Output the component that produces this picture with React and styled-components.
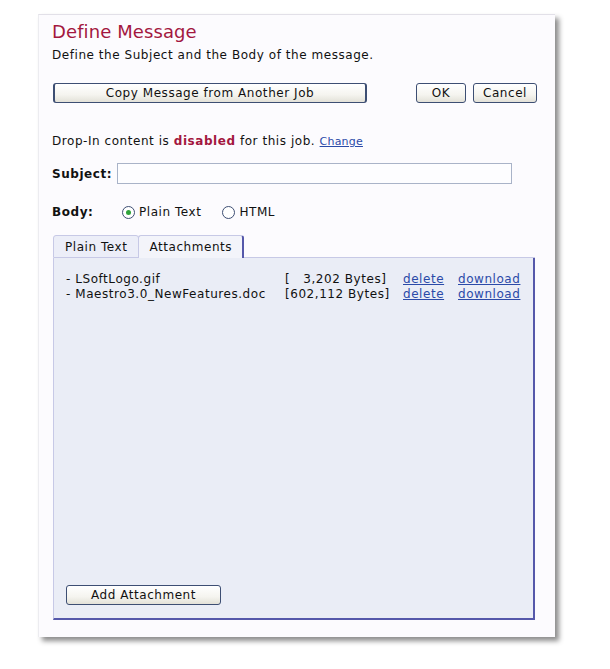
import React from 'react'
import styled, { createGlobalStyle } from 'styled-components'

const Global = createGlobalStyle`
  body {
    margin: 0;
    background: #ffffff;
    font-family: "DejaVu Sans", Verdana, sans-serif;
    letter-spacing: 0.55px;
    color: #111;
  }
`

const Page = styled.div`
  width: 610px;
  height: 669px;
  padding: 14px 0 0 38px;
  box-sizing: border-box;
`

const Dialog = styled.div`
  width: 517px;
  height: 623px;
  box-sizing: border-box;
  background: #fcfbfe;
  border-top: 1px solid #e2e0e8;
  border-left: 1px solid #ececf0;
  box-shadow: 4px 4px 5px rgba(0, 0, 0, 0.45);
  padding: 6px 18px 0 13px;
  display: flex;
  flex-direction: column;
`

const Title = styled.h1`
  margin: 0;
  font-size: 18px;
  font-weight: normal;
  letter-spacing: 0.1px;
  color: #a3173f;
  line-height: 22px;
`

const Sub = styled.p`
  margin: 4px 0 0;
  font-size: 12px;
  line-height: 16px;
`

const Toolbar = styled.div`
  display: flex;
  align-items: center;
  margin-top: 20px;
  padding-left: 1px;
`

const Button = styled.button`
  font-family: inherit;
  font-size: 12px;
  letter-spacing: 0.55px;
  color: #111;
  height: 20px;
  width: ${p => p.$w}px;
  padding: 0;
  margin-left: ${p => p.$ml || 0}px;
  border: 1px solid #3d4e73;
  border-left-width: ${p => (p.$heavy ? 2 : 1)}px;
  border-right-width: ${p => (p.$heavy ? 2 : 1)}px;
  border-radius: 3px;
  background: linear-gradient(#ffffff 0%, #f5f4ef 60%, #e3e1d8 100%);
  line-height: 18px;
  flex-shrink: 0;
`

const Spacer = styled.div`
  flex: 1;
`

const DropIn = styled.p`
  margin: 30px 0 0;
  font-size: 12px;
  line-height: 16px;
`

const Disabled = styled.b`
  color: #a3173f;
`

const SmallLink = styled.a`
  font-size: 11px;
  letter-spacing: 0.2px;
  color: #2b4aa8;
  text-decoration: underline;
`

const FieldRow = styled.div`
  display: flex;
  align-items: center;
  margin-top: ${p => p.$mt}px;
`

const Label = styled.span`
  font-size: 12px;
  font-weight: bold;
  width: ${p => p.$w}px;
`

const TextInput = styled.input`
  width: 395px;
  height: 21px;
  box-sizing: border-box;
  border: 1px solid #a9b3c8;
  background: #fdfdff;
  padding: 0 3px;
`

const Radio = styled.label`
  display: flex;
  align-items: center;
  font-size: 12px;
  margin-right: ${p => p.$mr}px;
`

const Dot = styled.span`
  width: 11px;
  height: 11px;
  border-radius: 50%;
  border: 1px solid #3d4e73;
  background: #fff;
  margin-right: 4px;
  display: flex;
  align-items: center;
  justify-content: center;
  &::after {
    content: '';
    width: 5px;
    height: 5px;
    border-radius: 50%;
    background: ${p => (p.$on ? '#2fa33a' : 'transparent')};
  }
`

const Tabs = styled.div`
  display: flex;
  align-items: flex-end;
  margin-top: 16px;
  margin-left: 1px;
  width: 482px;
  height: 23px;
  flex-shrink: 0;
`

const Tab = styled.div`
  font-size: 12px;
  height: 23px;
  line-height: 22px;
  box-sizing: border-box;
  padding: 0 ${p => p.$px}px;
  border: 1px solid #c7c9e6;
  border-bottom: ${p => (p.$active ? 'none' : '1px solid #c7c9e6')};
  border-right: ${p => (p.$active ? '2px solid #5558aa' : '1px solid #c7c9e6')};
  border-radius: 3px 3px 0 0;
  background: ${p => (p.$active ? '#f3f4fa' : '#eceef8')};
  margin-right: ${p => (p.$active ? 0 : -1)}px;
`

const TabFill = styled.div`
  flex: 1;
  align-self: stretch;
  border-bottom: 1px solid #c7c9e6;
`

const Panel = styled.div`
  width: 482px;
  height: 362px;
  flex-shrink: 0;
  margin-left: 1px;
  box-sizing: border-box;
  background: #eaedf6;
  border-left: 1px solid #c7c9e6;
  border-right: 2px solid #5558aa;
  border-bottom: 2px solid #5558aa;
  padding: 14px 12px 13px 12px;
  display: flex;
  flex-direction: column;
`

const FileList = styled.div`
  display: grid;
  grid-template-columns: 219px 118px 55px auto;
  font-size: 12px;
  line-height: 15px;
  white-space: pre;
`

const FileLink = styled.a`
  color: #2b4aa8;
  text-decoration: underline;
`

const files = [
  { name: '- LSoftLogo.gif', size: '[   3,202 Bytes]' },
  { name: '- Maestro3.0_NewFeatures.doc', size: '[602,112 Bytes]' },
]

export default function App() {
  return (
    <Page>
      <Global />
      <Dialog>
        <Title>Define Message</Title>
        <Sub>Define the Subject and the Body of the message.</Sub>
        <Toolbar>
          <Button $w={314} $heavy>Copy Message from Another Job</Button>
          <Spacer />
          <Button $w={50}>OK</Button>
          <Button $w={64} $ml={7}>Cancel</Button>
        </Toolbar>
        <DropIn>
          Drop-In content is <Disabled>disabled</Disabled> for this job.{' '}
          <SmallLink href="#">Change</SmallLink>
        </DropIn>
        <FieldRow $mt={13}>
          <Label $w={65}>Subject:</Label>
          <TextInput />
        </FieldRow>
        <FieldRow $mt={21}>
          <Label $w={70}>Body:</Label>
          <Radio $mr={21}><Dot $on />Plain Text</Radio>
          <Radio $mr={0}><Dot />HTML</Radio>
        </FieldRow>
        <Tabs>
          <Tab $px={11}>Plain Text</Tab>
          <Tab $px={10} $active>Attachments</Tab>
          <TabFill />
        </Tabs>
        <Panel>
          <FileList>
            {files.map(f => (
              <React.Fragment key={f.name}>
                <span>{f.name}</span>
                <span>{f.size}</span>
                <FileLink href="#">delete</FileLink>
                <FileLink href="#">download</FileLink>
              </React.Fragment>
            ))}
          </FileList>
          <Spacer />
          <Button $w={155}>Add Attachment</Button>
        </Panel>
      </Dialog>
    </Page>
  )
}
